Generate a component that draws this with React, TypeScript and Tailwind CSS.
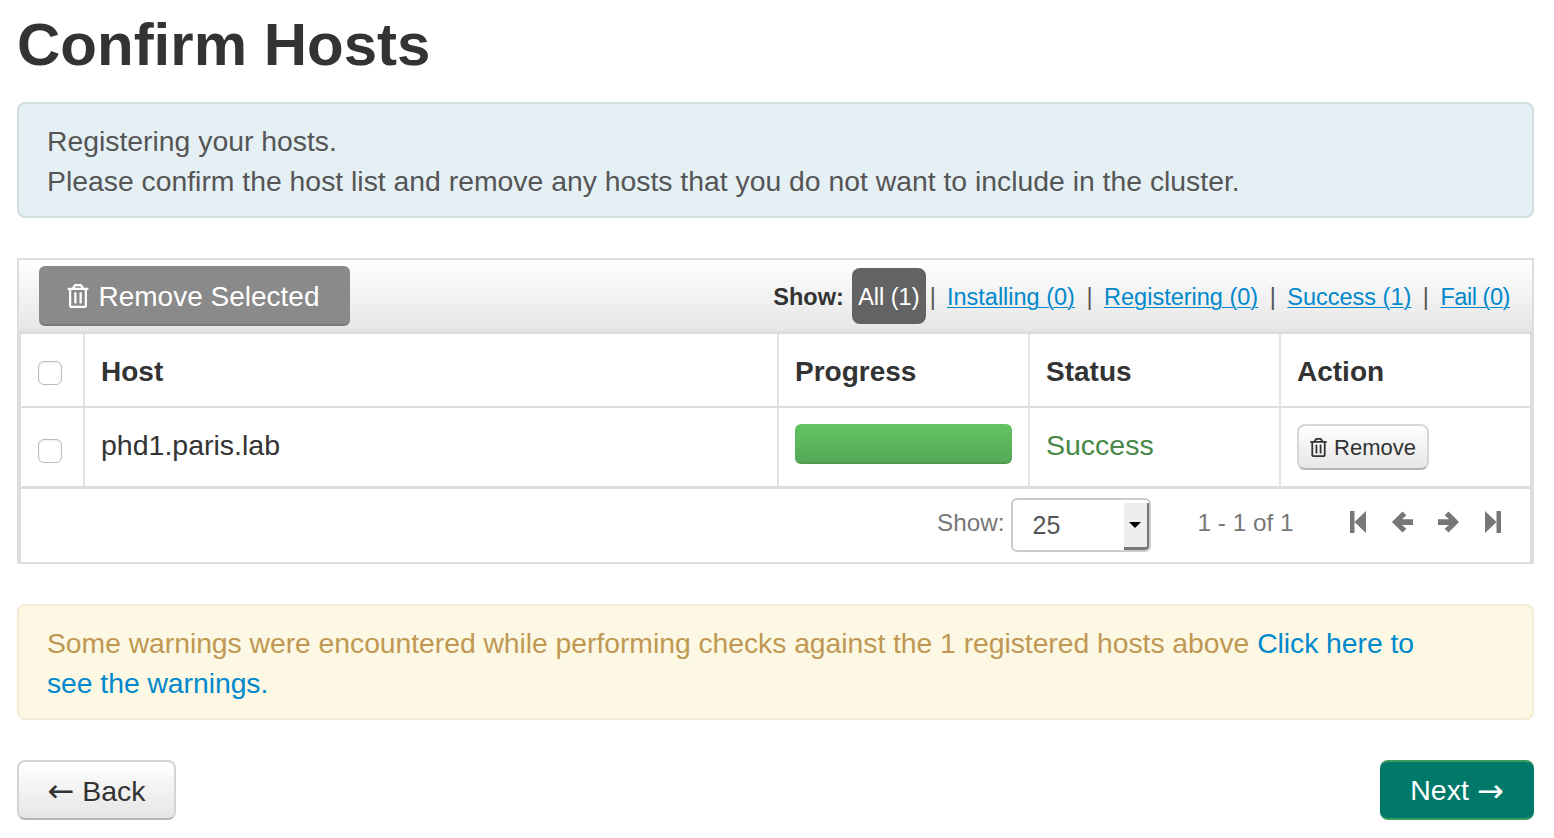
import React from "react";
import { FaRegTrashAlt } from "react-icons/fa";

const font = { fontFamily: '"Liberation Sans", Arial, sans-serif' };

function Sep({ first }: { first?: boolean }) {
  return <span className={first ? "ml-[4px] mr-[11px] pt-[4px] text-[#555] font-normal" : "mx-[11.5px] pt-[4px] text-[#555] font-normal"}>|</span>;
}

function FilterLink({ children, tight }: { children: React.ReactNode; tight?: boolean }) {
  return (
    <a className={tight ? "pt-[4px] text-[#0088cc] underline underline-offset-2 decoration-1 tracking-[-0.45px]" : "pt-[4px] text-[#0088cc] underline underline-offset-2 decoration-1"}>
      {children}
    </a>
  );
}

function Check() {
  return <span className="block w-6 h-6 rounded-[6px] border border-[#bbb] bg-white shadow-[inset_0_1px_2px_rgba(0,0,0,0.08)]" />;
}

function ArrowIcon({ flip }: { flip?: boolean }) {
  return (
    <svg viewBox="0 0 24 24" className={flip ? "w-[23px] h-[24px] fill-[#777] -scale-x-100" : "w-[23px] h-[24px] fill-[#777]"}>
      <path d="M12 1 L16 5 L11.5 9 H23 V15 H11.5 L16 19 L12 23 L1 12 Z" />
    </svg>
  );
}

function StepIcon({ flip }: { flip?: boolean }) {
  return (
    <svg viewBox="0 0 16 22" className={flip ? "w-[16px] h-[22px] fill-[#777] -scale-x-100" : "w-[16px] h-[22px] fill-[#777]"}>
      <path d="M0 0 H4.5 V22 H0 Z M4.5 11 L16 0 V22 Z" />
    </svg>
  );
}

export default function App() {
  return (
    <div className="w-[1554px] h-[838px] overflow-hidden bg-white pl-[17px] pr-[20px] text-[#333]" style={font}>
      <h1 className="text-[60px] leading-[60px] font-bold pt-[15px] h-[102px] text-[#333]">Confirm Hosts</h1>

      <div className="h-[116px] rounded-[8px] border-2 border-[#d4dfe3] bg-[#e5f0f5] pl-[28px] pt-[17px] text-[28.35px] leading-[40px] text-[#555]">
        <div>Registering your hosts.</div>
        <div>Please confirm the host list and remove any hosts that you do not want to include in the cluster.</div>
      </div>

      <div className="mt-[40px] h-[306px] border-2 border-[#ddd]">
        <div className="h-[71px] flex items-center justify-between pl-[20px] pr-[22px] bg-gradient-to-b from-white to-[#e6e6e6]">
          <button className="w-[311px] h-[60px] mt-[1px] rounded-[6px] bg-[#8a8a8a] border-b-2 border-[#7a7a7a] text-white text-[28px] flex items-center justify-center gap-[9px] pr-[2px]">
            <FaRegTrashAlt className="w-[22px] h-[24px] mt-[2px]" />
            <span className="pt-[4px]">Remove Selected</span>
          </button>
          <div className="flex items-center text-[23.5px] pt-[1px]">
            <span className="font-bold text-[#333] mr-[8px] pt-[4px]">Show:</span>
            <span className="h-[56px] w-[74px] rounded-[8px] bg-[#636363] text-white flex items-center justify-center pt-[4px]">All (1)</span>
            <Sep first />
            <FilterLink>Installing (0)</FilterLink>
            <Sep />
            <FilterLink>Registering (0)</FilterLink>
            <Sep />
            <FilterLink>Success (1)</FilterLink>
            <Sep />
            <FilterLink tight>Fail (0)</FilterLink>
          </div>
        </div>

        <div className="h-[231px] border-t-[3px] border-x-2 border-[#ddd]">
          <div className="flex h-[74px] border-b-2 border-[#ddd] items-center text-[28px] font-bold">
            <div className="w-[64px] h-full flex items-center justify-center border-r-2 border-[#e2e2e2] pr-[4px] pt-[6px]"><Check /></div>
            <div className="w-[694px] h-full flex items-center pl-[16px] pt-[4px] border-r-2 border-[#e2e2e2]">Host</div>
            <div className="w-[251px] h-full flex items-center pl-[16px] pt-[4px] border-r-2 border-[#e2e2e2]">Progress</div>
            <div className="w-[251px] h-full flex items-center pl-[16px] pt-[4px] border-r-2 border-[#e2e2e2]">Status</div>
            <div className="flex-1 h-full flex items-center pl-[16px] pt-[4px]">Action</div>
          </div>
          <div className="flex h-[81px] border-b-[3px] border-[#ddd] items-center text-[28.5px]">
            <div className="w-[64px] h-full flex items-center justify-center border-r-2 border-[#e2e2e2] pr-[4px] pt-[8px]"><Check /></div>
            <div className="w-[694px] h-full flex items-center pl-[16px] pb-[4px] border-r-2 border-[#e2e2e2]">phd1.paris.lab</div>
            <div className="w-[251px] h-full flex items-center pl-[16px] pb-[6px] border-r-2 border-[#e2e2e2]">
              <div className="w-[217px] h-[40px] rounded-[6px] bg-gradient-to-b from-[#62c462] to-[#57a957] border-b-2 border-[#4f9a4f]" />
            </div>
            <div className="w-[251px] h-full flex items-center pl-[16px] pb-[4px] border-r-2 border-[#e2e2e2] text-[#468847]">Success</div>
            <div className="flex-1 h-full flex items-center pl-[16px]">
              <button className="w-[132px] h-[46px] rounded-[8px] border-2 border-[#d6d6d6] border-b-[#b5b5b5] bg-gradient-to-b from-white to-[#e6e6e6] text-[22px] text-[#333] flex items-center justify-center gap-[7px]">
                <FaRegTrashAlt className="w-[17px] h-[19px]" />
                <span>Remove</span>
              </button>
            </div>
          </div>
          <div className="flex h-[73px] items-center text-[24.3px] text-[#777]">
            <span className="ml-[916px] pb-[4px]">Show:</span>
            <div className="relative ml-[6px] w-[140px] h-[54px] mb-[1px] rounded-[6px] border-2 border-[#ccc] bg-white flex items-center pl-[20px] text-[#555] text-[25px] pt-[1px]">
              <span>25</span>
              <div className="absolute right-0 top-[3px] bottom-0 w-[25px] bg-[#eee] border-r-[2px] border-b-[3px] border-[#777] rounded-br-[4px] flex items-center justify-center">
                <span className="w-0 h-0 border-x-[6px] border-x-transparent border-t-[6px] border-t-black" />
              </div>
            </div>
            <span className="ml-[47px] pb-[4px] whitespace-nowrap">1 - 1 of 1</span>
            <div className="flex items-center ml-[57px] pb-[8px]">
              <StepIcon />
              <span className="ml-[25px]"><ArrowIcon /></span>
              <span className="ml-[23px]"><ArrowIcon flip /></span>
              <span className="ml-[25px]"><StepIcon flip /></span>
            </div>
          </div>
        </div>
      </div>

      <div className="mt-[40px] h-[116px] rounded-[8px] border-2 border-[#f6ecd3] bg-[#fcf8e3] pl-[28px] pt-[17px] text-[28.35px] leading-[40px] text-[#c09853] tracking-[-0.05px]">
        <div>Some warnings were encountered while performing checks against the 1 registered hosts above <a className="text-[#0088cc]">Click here to</a></div>
        <div><a className="text-[#0088cc]">see the warnings.</a></div>
      </div>

      <div className="mt-[40px] flex justify-between">
        <button className="w-[159px] h-[60px] pt-[2px] rounded-[8px] border-2 border-[#d4d4d4] border-b-[#b5b5b5] bg-gradient-to-b from-white to-[#e6e6e6] text-[28.5px] text-[#333] flex items-center justify-center gap-[8px]">
          <span className="font-['DejaVu_Sans'] text-[32px] leading-[32px]">←</span>
          <span>Back</span>
        </button>
        <button className="w-[154px] h-[60px] pt-[1px] rounded-[8px] border-t-2 border-b-2 border-[#3f9c5a] bg-[#00796b] text-[28.5px] text-white flex items-center justify-center gap-[8px]">
          <span>Next</span>
          <span className="font-['DejaVu_Sans'] text-[32px] leading-[32px]">→</span>
        </button>
      </div>
    </div>
  );
}
